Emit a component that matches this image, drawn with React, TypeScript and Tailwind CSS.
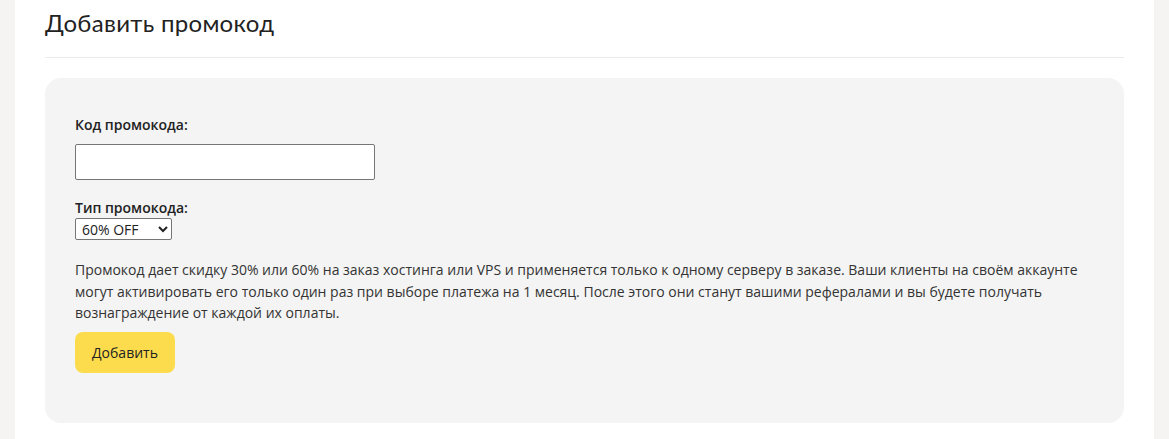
import React, { useState } from "react";

function App() {
  const [code, setCode] = useState("");
  const [type, setType] = useState("60");

  return (
    <div className="min-h-screen bg-[#f5f4f2] px-[15px] font-['Open_Sans',sans-serif]">
      <div className="bg-white px-[30px] pt-[6px] pb-[17px] h-[439px]">
        {/* Header */}
        <h1 className="font-['Lato',sans-serif] text-[24px] leading-[34px] text-[#222] tracking-[0.3px]">
          Добавить промокод
        </h1>
        <div className="mt-[17px] border-t border-[#ebebeb]" />

        {/* Form card */}
        <div className="mt-[20px] bg-[#f4f4f4] rounded-[16px] pl-[30px] pr-[30px] pt-[37px] pb-[50px] text-[14px] text-[#222]">
          <label className="block font-semibold leading-[20px]">Код промокода:</label>
          <input
            type="text"
            value={code}
            onChange={(e) => setCode(e.target.value)}
            className="mt-[9px] block w-[300px] h-[36px] bg-white border border-[#767676] rounded-[2px] px-2 outline-none"
          />

          <label className="block mt-[18px] font-semibold leading-[20px]">Тип промокода:</label>
          <select
            value={type}
            onChange={(e) => setType(e.target.value)}
            className="block w-[97px] h-[22px] bg-white border border-[#767676] rounded-[2px] text-[14px] pl-[2px] leading-[20px]"
          >
            <option value="30">30% OFF</option>
            <option value="60">60% OFF</option>
          </select>

          <p className="mt-[19px] leading-[21.5px] text-[#333]">
            Промокод дает скидку 30% или 60% на заказ хостинга или VPS и применяется только к одному серверу в заказе. Ваши клиенты на своём аккаунте могут активировать его только один раз при выборе платежа на 1 месяц. После этого они станут вашими рефералами и вы будете получать вознаграждение от каждой их оплаты.
          </p>

          <button className="mt-[8px] w-[100px] h-[41px] bg-[#fcdc4d] rounded-[8px] text-[14px] text-[#222]">
            Добавить
          </button>
        </div>
      </div>
    </div>
  );
}

export default App;
